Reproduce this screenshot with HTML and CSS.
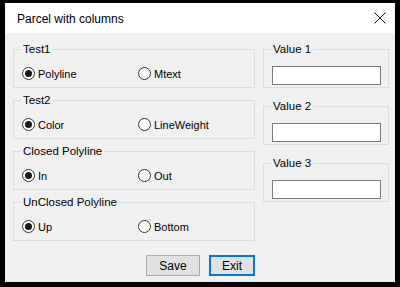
FILE: index.html
```html
<!DOCTYPE html>
<html lang="en">
  <head>
    <meta charset="UTF-8" />
    <title>Parcel with columns</title>
    <link rel="stylesheet" href="styles.css">
  </head>
  <body>
    <div class="window">
      <div class="title-bar">
        <span class="title">Parcel with columns</span>
        <svg class="close" width="12" height="12" viewBox="0 0 12 12">
          <path d="M0.5 0.5 L11.5 11.5 M11.5 0.5 L0.5 11.5" stroke="#111" stroke-width="1" fill="none" />
        </svg>
      </div>

      <div class="client">
        <div class="columns">
          <div class="left-col">
            <fieldset class="group">
              <legend>Test1</legend>
              <div class="radio-row">
                <label class="option"><span class="radio on"></span>Polyline</label>
                <label class="option"><span class="radio"></span>Mtext</label>
              </div>
            </fieldset>
            <fieldset class="group">
              <legend>Test2</legend>
              <div class="radio-row">
                <label class="option"><span class="radio on"></span>Color</label>
                <label class="option"><span class="radio"></span>LineWeight</label>
              </div>
            </fieldset>
            <fieldset class="group">
              <legend>Closed Polyline</legend>
              <div class="radio-row">
                <label class="option"><span class="radio on"></span>In</label>
                <label class="option"><span class="radio"></span>Out</label>
              </div>
            </fieldset>
            <fieldset class="group">
              <legend>UnClosed Polyline</legend>
              <div class="radio-row">
                <label class="option"><span class="radio on"></span>Up</label>
                <label class="option"><span class="radio"></span>Bottom</label>
              </div>
            </fieldset>
          </div>

          <div class="right-col">
            <fieldset class="group value-group">
              <legend>Value 1</legend>
              <div class="textbox"></div>
            </fieldset>
            <fieldset class="group value-group">
              <legend>Value 2</legend>
              <div class="textbox"></div>
            </fieldset>
            <fieldset class="group value-group">
              <legend>Value 3</legend>
              <div class="textbox"></div>
            </fieldset>
          </div>
        </div>

        <div class="button-row">
          <button class="btn save-btn">Save</button>
          <button class="btn exit-btn">Exit</button>
        </div>
      </div>
    </div>
  </body>
</html>
```

FILE: styles.css
```css
* {
  box-sizing: border-box;
}

body {
  margin: 0;
  padding: 3px 5px 5px 5px;
  background-color: #000;
  font-family: "Liberation Sans", Arial, sans-serif;
  font-size: 11px;
  color: #000;
}

.window {
  width: 390px;
  height: 279px;
  background-color: #f0f0f0;
  display: flex;
  flex-direction: column;
}

.title-bar {
  height: 30px;
  background-color: #fff;
  display: flex;
  align-items: center;
  justify-content: space-between;
  padding: 0 9px 0 12px;
}

.title {
  font-size: 12px;
  padding-top: 1px;
}

.client {
  flex: 1;
  padding: 9px 7px 0 8px;
}

.columns {
  display: flex;
  gap: 8px;
}

.left-col {
  width: 242px;
  flex-shrink: 0;
  display: flex;
  flex-direction: column;
  gap: 5px;
}

.right-col {
  width: 126px;
  flex-shrink: 0;
  display: flex;
  flex-direction: column;
  gap: 11px;
}

.group {
  margin: 0;
  min-width: 0;
  height: 46px;
  border: 1px solid #dcdcdc;
  padding: 0 8px;
}

.group legend {
  padding: 0 2px;
  margin-left: -1px;
  line-height: 14px;
  font-size: 11.5px;
}

.radio-row {
  display: flex;
  padding-top: 11px;
}

.option {
  display: flex;
  align-items: center;
}

.option:first-child {
  width: 116px;
}

.radio {
  width: 13px;
  height: 13px;
  border: 1px solid #333;
  border-radius: 50%;
  background-color: #fff;
  margin-right: 3px;
  display: flex;
  align-items: center;
  justify-content: center;
}

.radio.on::after {
  content: "";
  width: 7px;
  height: 7px;
  border-radius: 50%;
  background-color: #1a1a1a;
}

.textbox {
  margin-top: 10px;
  width: 109px;
  height: 19px;
  border: 1px solid #7a7a7a;
  background-color: #fff;
}

.button-row {
  display: flex;
  justify-content: center;
  gap: 9px;
  margin-top: 14px;
}

.btn {
  height: 21px;
  font-family: inherit;
  font-size: 12px;
  color: #000;
  background-color: #e1e1e1;
  border: 1px solid #adadad;
  padding: 0;
}

.save-btn {
  width: 54px;
}

.exit-btn {
  width: 46px;
  border: 2px solid #0078d7;
}
```
